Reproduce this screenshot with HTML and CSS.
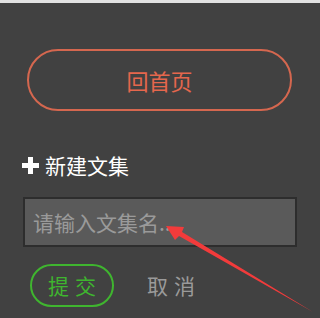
FILE: index.html
```html
<!DOCTYPE html>
<html lang="zh">
<head>
<meta charset="utf-8">
<title>新建文集</title>
<link rel="stylesheet" href="styles.css">
</head>
<body>
<div class="page">
  <a class="home-btn">回首页</a>
  <div class="new-title"><span class="plus"></span>新建文集</div>
  <input class="name-input" type="text" placeholder="请输入文集名..">
  <div class="actions">
    <button class="submit">提交</button>
    <button class="cancel">取消</button>
  </div>
  <svg class="arrow" width="319" height="318" viewBox="0 0 319 318">
    <polygon points="166,226 184,227 182,232 313,312 179,236 175,240" fill="#f23b3b"/>
  </svg>
</div>
</body>
</html>
```

FILE: styles.css
```css
html, body {
  margin: 0;
  padding: 0;
  background: #414141;
}
body {
  font-family: "Noto Sans CJK SC", "Noto Sans", sans-serif;
  overflow: hidden;
}
.page {
  position: relative;
  height: 315px;
  border-top: 3px solid #e2e2e2;
  padding: 46px 0 0 22px;
  box-sizing: border-box;
  display: flex;
  flex-direction: column;
  align-items: flex-start;
}
.home-btn {
  margin-left: 5px;
  width: 265px;
  height: 62px;
  box-sizing: border-box;
  border: 2px solid #d5674f;
  border-radius: 31px;
  display: flex;
  align-items: center;
  justify-content: center;
  color: #e5674d;
  font-size: 22px;
  line-height: 1;
}
.new-title {
  margin-top: 42px;
  display: flex;
  align-items: center;
  color: #ffffff;
  font-size: 21px;
  line-height: 24px;
  height: 24px;
}
.plus {
  position: relative;
  width: 17px;
  height: 17px;
  margin-right: 6px;
}
.plus::before, .plus::after {
  content: "";
  position: absolute;
  background: #ffffff;
}
.plus::before {
  left: 0;
  top: 6px;
  width: 17px;
  height: 5px;
}
.plus::after {
  left: 6px;
  top: 0;
  width: 5px;
  height: 17px;
}
.name-input {
  margin: 20px 0 0 1px;
  width: 274px;
  height: 50px;
  box-sizing: border-box;
  border: 2px solid #2d2d2d;
  background: #5a5a5a;
  padding: 0 8px;
  font-family: inherit;
  font-size: 21px;
  color: #ffffff;
  outline: none;
}
.name-input::placeholder {
  color: #9a9a9a;
}
.actions {
  margin: 17px 0 0 8px;
  display: flex;
  align-items: center;
}
.actions button {
  font-family: inherit;
  font-size: 21px;
  letter-spacing: 6px;
  background: none;
  cursor: pointer;
  padding: 0;
  line-height: 1;
}
.submit {
  width: 84px;
  height: 43px;
  box-sizing: border-box;
  border: 2px solid #3fb52f;
  border-radius: 22px;
  color: #3fb52f;
  padding-left: 6px !important;
}
.cancel {
  margin-left: 33px;
  border: none;
  color: #9a9a9a;
}
.arrow {
  position: absolute;
  left: 0;
  top: -3px;
  pointer-events: none;
}
```
